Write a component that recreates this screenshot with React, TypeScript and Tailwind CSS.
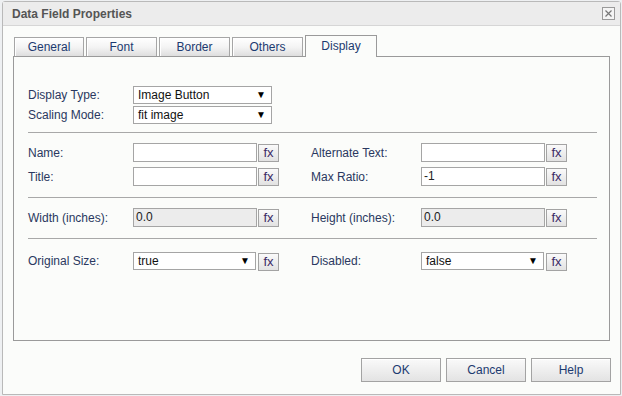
import React from 'react'

const font = { fontFamily: '"Liberation Sans", Arial, sans-serif' }

const tabs = [
  { name: 'General', w: 'w-[70px]' },
  { name: 'Font', w: 'w-[71px]' },
  { name: 'Border', w: 'w-[71px]' },
  { name: 'Others', w: 'w-[71px]' },
]

function Fx() {
  return (
    <button className="ml-px h-[18px] w-[21px] shrink-0 border border-[#a3a3a3] bg-gradient-to-b from-[#fafafa] to-[#e2e2e2] text-[13px] leading-[14px] text-[#3b2a66]">
      fx
    </button>
  )
}

function TextBox({ value = '', disabled = false }: { value?: string; disabled?: boolean }) {
  return (
    <div
      className={
        'h-[19px] w-[124px] shrink-0 border border-[#a5a5a5] px-[2px] text-[12px] leading-[17px] text-[#222] ' +
        (disabled ? 'bg-[#ececec]' : 'bg-white')
      }
    >
      {value}
    </div>
  )
}

function Select({ value, width }: { value: string; width: string }) {
  return (
    <div
      className={
        'flex h-[18px] shrink-0 items-center justify-between border border-[#a5a5a5] bg-white pl-[4px] pr-[5px] text-[12px] text-[#111] ' +
        width
      }
    >
      <span>{value}</span>
      <span className="text-[10px] leading-none text-black">▼</span>
    </div>
  )
}

function Label({ text, width }: { text: string; width: string }) {
  return <div className={'shrink-0 text-[12px] leading-[16px] text-[#2a3860] ' + width}>{text}</div>
}

function Sep() {
  return <div className="h-px bg-[#a8a8a8]" />
}

export default function App() {
  return (
    <div className="h-[396px] w-[622px] bg-[#eef0f2] pt-px pl-[2px]" style={font}>
      <div className="flex h-[394px] w-[619px] flex-col rounded-t-[3px] border border-[#b9b9b9] bg-[#fbfcfa]">
        {/* Title bar */}
        <div className="flex h-[24px] shrink-0 items-center justify-between border-b border-[#d6d6d6] bg-[#ececec] pl-[9px] pr-[5px]">
          <span className="text-[12px] font-bold text-[#555]">Data Field Properties</span>
          <svg width="13" height="13" viewBox="0 0 13 13">
            <rect x="0.5" y="0.5" width="12" height="12" fill="#f4f4f4" stroke="#9a9a9a" />
            <path d="M3.5 3.5 L9.5 9.5 M9.5 3.5 L3.5 9.5" stroke="#777" strokeWidth="1.2" />
          </svg>
        </div>

        <div className="flex flex-1 flex-col pl-[10px] pr-[8px] pt-[9px]">
          {/* Tabs */}
          <div className="relative z-10 flex h-[21px] items-end gap-[2px] pl-px">
            {tabs.map((t) => (
              <div
                key={t.name}
                className={
                  'flex h-[19px] items-center justify-center border border-b-0 border-[#a6a6a6] bg-gradient-to-b from-[#ffffff] via-[#f4f4f4] to-[#dedede] text-[12px] text-[#1c3a70] shadow-[inset_1px_1px_0_#fff] ' +
                  t.w
                }
              >
                {t.name}
              </div>
            ))}
            <div className="-mb-px flex h-[22px] w-[72px] items-center justify-center border border-b-0 border-[#9a9a9a] bg-[#fbfcfa] pb-[2px] text-[12px] text-[#1c3a70]">
              Display
            </div>
          </div>

          {/* Panel */}
          <div className="h-[285px] w-[597px] border border-[#9a9a9a] pl-[14px] pr-[12px] pt-[29px]">
            <div className="flex flex-col gap-[2px]">
              <div className="flex items-center">
                <Label text="Display Type:" width="w-[105px]" />
                <Select value="Image Button" width="w-[139px]" />
              </div>
              <div className="flex items-center">
                <Label text="Scaling Mode:" width="w-[105px]" />
                <Select value="fit image" width="w-[139px]" />
              </div>
            </div>

            <div className="mt-[8px]">
              <Sep />
            </div>

            <div className="mt-[10px] flex flex-col gap-[5px]">
              <div className="flex items-center">
                <Label text="Name:" width="w-[105px]" />
                <TextBox />
                <Fx />
                <Label text="Alternate Text:" width="ml-[32px] w-[110px]" />
                <TextBox />
                <Fx />
              </div>
              <div className="flex items-center">
                <Label text="Title:" width="w-[105px]" />
                <TextBox />
                <Fx />
                <Label text="Max Ratio:" width="ml-[32px] w-[110px]" />
                <TextBox value="-1" />
                <Fx />
              </div>
            </div>

            <div className="mt-[11px]">
              <Sep />
            </div>

            <div className="mt-[10px] flex items-center">
              <Label text="Width (inches):" width="w-[105px]" />
              <TextBox value="0.0" disabled />
              <Fx />
              <Label text="Height (inches):" width="ml-[32px] w-[110px]" />
              <TextBox value="0.0" disabled />
              <Fx />
            </div>

            <div className="mt-[11px]">
              <Sep />
            </div>

            <div className="mt-[10px] flex items-center">
              <Label text="Original Size:" width="w-[105px]" />
              <Select value="true" width="w-[123px]" />
              <div className="ml-[1px]">
                <Fx />
              </div>
              <Label text="Disabled:" width="ml-[32px] w-[110px]" />
              <Select value="false" width="w-[123px]" />
              <div className="ml-[1px]">
                <Fx />
              </div>
            </div>
          </div>

          {/* Buttons */}
          <div className="mt-[17px] flex justify-end gap-[5px] pr-px">
            {['OK', 'Cancel', 'Help'].map((b) => (
              <button
                key={b}
                className="h-[24px] w-[80px] border border-[#a3a3a3] bg-gradient-to-b from-[#fafafa] to-[#e3e3e3] text-[12px] text-[#1c3a70] shadow-[inset_0_1px_0_#fff]"
              >
                {b}
              </button>
            ))}
          </div>
        </div>
      </div>
    </div>
  )
}
